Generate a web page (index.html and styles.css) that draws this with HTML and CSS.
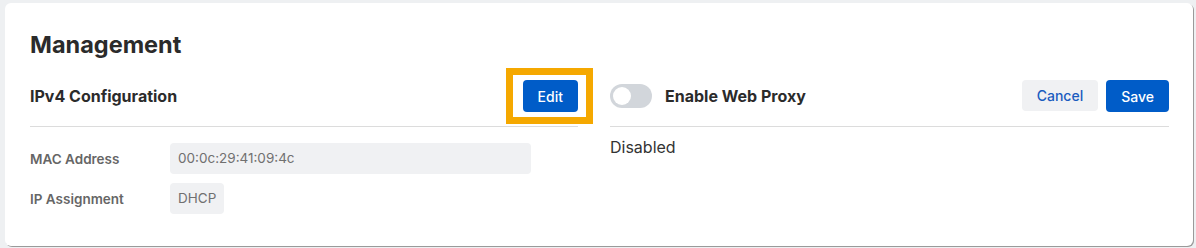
FILE: index.html
```html
<!DOCTYPE html>
<html lang="en">
<head>
  <meta charset="UTF-8">
  <title>Management</title>
  <link rel="stylesheet" href="styles.css">
</head>
<body>
  <div class="card">
    <h1>Management</h1>
    <div class="columns">
      <section class="panel">
        <div class="panel-head">
          <h2>IPv4 Configuration</h2>
          <button class="btn btn-primary btn-highlight">Edit</button>
        </div>
        <div class="fields">
          <div class="field">
            <span class="field-label">MAC Address</span>
            <span class="field-value wide">00:0c:29:41:09:4c</span>
          </div>
          <div class="field">
            <span class="field-label">IP Assignment</span>
            <span class="field-value">DHCP</span>
          </div>
        </div>
      </section>

      <section class="panel">
        <div class="panel-head">
          <div class="toggle-wrap">
            <span class="toggle"><span class="knob"></span></span>
            <h2>Enable Web Proxy</h2>
          </div>
          <div class="actions">
            <button class="btn btn-light">Cancel</button>
            <button class="btn btn-primary">Save</button>
          </div>
        </div>
        <p class="status">Disabled</p>
      </section>
    </div>
  </div>
</body>
</html>
```

FILE: styles.css
```css
body {
  margin: 0;
  padding: 3px 3px 1px 5px;
  background: #eef0f2;
  font-family: Inter, "Noto Sans", sans-serif;
  color: #2b2b2b;
}
.card {
  background: #fff;
  border-radius: 6px;
  box-shadow: 1px 1px 0 #9a9a9a;
  padding: 27px 24px 32px 25px;
  height: 184px;
}
h1 {
  margin: 0 0 20px;
  font-size: 23.5px;
  font-weight: 700;
  line-height: 30px;
  color: #2b2b2b;
}
.columns {
  display: grid;
  grid-template-columns: 548px 1fr;
  gap: 32px;
}
.panel-head {
  display: flex;
  align-items: center;
  justify-content: space-between;
  padding: 0 0 14px;
  border-bottom: 1px solid #dcdcdc;
}
.panel-head h2 {
  margin: 0;
  font-size: 16px;
  font-weight: 700;
  color: #2b2b2b;
}
.btn {
  border: none;
  border-radius: 4px;
  font-family: inherit;
  font-size: 14px;
  font-weight: 500;
  padding: 0 15px;
  height: 32px;
  cursor: pointer;
}
.btn-primary {
  background: #005cc8;
  color: #fff;
}
.btn-light {
  background: #f0f1f3;
  color: #1a5cbf;
  height: 31px;
  margin-left: 2px;
}
.btn-highlight {
  position: relative;
}
.btn-highlight::after {
  content: "";
  position: absolute;
  top: -12px;
  bottom: -12px;
  left: -17px;
  right: -15px;
  border: 7px solid #f5a800;
}
.actions {
  display: flex;
  gap: 8px;
}
.toggle-wrap {
  display: flex;
  align-items: center;
  gap: 13px;
}
.toggle {
  display: inline-flex;
  align-items: center;
  width: 42px;
  height: 24px;
  border-radius: 12px;
  background: #d2d6db;
  padding: 0 3px;
  box-sizing: border-box;
}
.knob {
  width: 18px;
  height: 18px;
  border-radius: 50%;
  background: #fff;
}
.fields {
  display: flex;
  flex-direction: column;
  gap: 9px;
  padding-top: 16px;
}
.field {
  display: flex;
  align-items: center;
}
.field-label {
  width: 140px;
  font-size: 13.5px;
  font-weight: 600;
  color: #666;
}
.field-value {
  background: #f0f1f3;
  border-radius: 4px;
  font-size: 13.5px;
  color: #707070;
  padding: 0 8px;
  height: 31px;
  line-height: 31px;
}
.field-value.wide {
  width: 361px;
  box-sizing: border-box;
}
.status {
  margin: 10px 0 0;
  font-size: 16px;
  color: #333;
}
```
